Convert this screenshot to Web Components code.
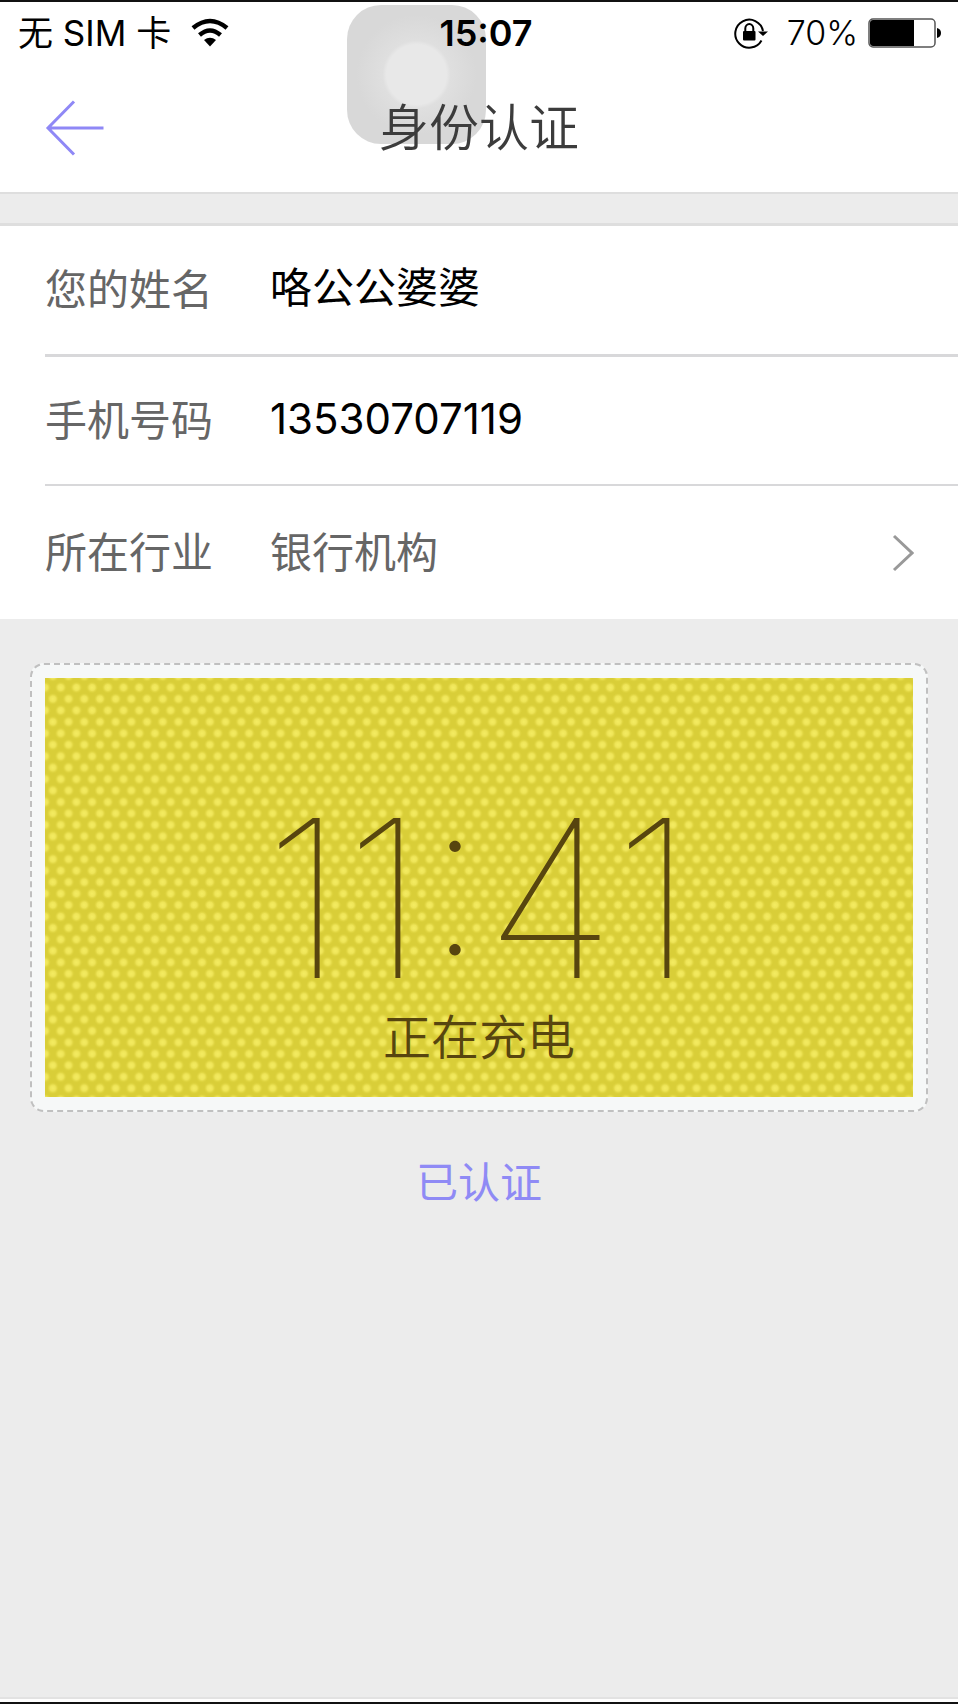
<!DOCTYPE html>
<html lang="zh-CN">
<head>
<meta charset="utf-8">
<meta name="viewport" content="width=device-width, initial-scale=1">
<title>身份认证</title>
<style>
  html { background: #ececec; }
  body { margin: 0; font-family: Inter, "Noto Sans CJK SC", sans-serif; color: #000; }
</style>
</head>
<body>
<identity-page></identity-page>

<script>
const define = (name, html, setup) => customElements.define(name, class extends HTMLElement {
  constructor() {
    super();
    this.attachShadow({ mode: "open" }).innerHTML = html;
  }
  connectedCallback() { if (setup) setup(this, this.shadowRoot); }
});

define("status-bar", `
<style>
  :host { display: grid; grid-template-columns: 1fr auto 1fr; align-items: center; height: 62px; padding: 0 16px 0 18px; font-size: 35px; line-height: 40px; }
  .left, .right { display: flex; align-items: center; }
  .left { gap: 20px; }
  .right { justify-content: flex-end; gap: 10px; font-size: 34px; font-weight: 300; }
  .lock { margin-right: 9px; }
  time { font-size: 36px; font-weight: 600; padding-left: 12px; }
  svg { display: block; flex: none; }
</style>
<div class="left"><span>无 SIM 卡</span>
  <svg width="38" height="30" viewBox="0 0 38 30" fill="none" stroke="#000" stroke-width="4.500" aria-label="Wi-Fi">
    <path d="M2 10 Q19 -4 36 10"/><path d="M8.500 17 Q19 8 29.500 17"/>
    <path d="M13 22 Q19 17.500 25 22 L19 28.500 Z" fill="#000" stroke="none"/>
  </svg>
</div>
<time>15:07</time>
<div class="right">
  <svg class="lock" width="34" height="32" viewBox="0 0 34 32" fill="none" aria-label="方向锁定">
    <path d="M27.500 23.500 A14 14 0 1 1 29 14" stroke="#000" stroke-width="2"/>
    <path d="M24 14.500 H34 L29 19 Z" fill="#000"/>
    <rect x="9" y="14" width="12.500" height="9.500" rx="1" fill="#000"/>
    <path d="M11.300 15 V11.500 a4 4.500 0 0 1 8 0 V15" stroke="#000" stroke-width="2"/>
  </svg>
  <span>70%</span>
  <svg width="74" height="30" viewBox="0 0 74 30" aria-label="电池">
    <rect x="1" y="1" width="66" height="28" rx="4" fill="#fff" stroke="#555" stroke-width="1.500"/>
    <path d="M5 2 H46 V28 H5 Q2 28 2 25 V5 Q2 2 5 2Z" fill="#000"/>
    <path d="M69 10 Q73 11 73 15 Q73 19 69 20Z" fill="#000"/>
  </svg>
</div>`);

define("nav-header", `
<style>
  :host { display: grid; grid-template-columns: 1fr auto 1fr; align-items: center; height: 128px; padding: 0 44px; border-bottom: 2px solid #dedede; }
  button { justify-self: start; display: block; padding: 0; border: 0; background: none; }
  svg { display: block; }
  h1 { margin: 0; font-size: 50px; line-height: 60px; font-weight: 350; color: #3c3c3c; }
</style>
<button aria-label="返回">
  <svg width="62" height="56" viewBox="0 0 62 56" fill="none" stroke="#8f88f6" stroke-width="3"><path d="M30 1.500 L4 28 L30 54.500 M4 28 H59.500"/></svg>
</button>
<h1><slot></slot></h1>`);

define("assistive-dot", `
<style>
  :host { display: block; width: 139px; height: 139px; border-radius: 34px; background: radial-gradient(circle at 50% 50%, #e8e8e8 30px, #dfdfdf 34px, #d8d8d8 60px); }
</style>`);

define("form-row", `
<style>
  :host { display: block; padding-left: 45px; background: #fff; }
  .row { display: flex; align-items: center; height: 127px; padding-right: 44px; border-bottom: 2px solid #d8d8da; }
  :host([first]) .row { height: 128px; border-bottom-width: 3px; }
  :host([last]) .row { height: 133px; border-bottom: 0; }
  label { flex: none; width: 225px; font-size: 42px; line-height: 60px; color: #666; }
  input, select { flex: 1; min-width: 0; height: 60px; margin: 0; padding: 0; border: 0; outline: 0; background: none; font: inherit; font-size: 42px; line-height: 60px; color: #000; appearance: none; }
  input { padding-bottom: 4px; }
  select { color: #666; opacity: 1; }
  svg { flex: none; }
</style>
<div class="row"></div>`, (host, root) => {
  const row = root.querySelector(".row");
  const value = host.getAttribute("value");
  const label = host.getAttribute("label");
  row.innerHTML = `<label for="field">${label}</label>` + (host.hasAttribute("choice")
    ? `<select id="field"><option>${value}</option></select>
       <svg width="22" height="38" viewBox="0 0 22 38" fill="none" stroke="#999" stroke-width="3"><path d="M2 2 L20 19 L2 36"/></svg>`
    : `<input id="field" type="${host.getAttribute("type") || "text"}" value="${value}">`);
});

define("photo-card", `
<style>
  :host { display: block; margin: 44px 30px 0; padding: 13px; border: 2px dashed #c0c0c0; border-radius: 14px; background: #f6f8f8; }
  .photo { position: relative; display: flex; flex-direction: column; align-items: center; height: 419px; color: #57450f; }
  .texture { position: absolute; inset: 0; width: 100%; height: 100%; }
  .clock, .state { position: relative; }
  .clock { margin-top: 110px; font-size: 220px; line-height: 220px; font-weight: 100; white-space: nowrap; }
  .state { font-size: 48px; line-height: 60px; font-weight: 350; }
</style>
<div class="photo">
  <svg class="texture" aria-hidden="true">
    <defs>
      <radialGradient id="glow"><stop offset="0" stop-color="#f4ec62"/><stop offset=".5" stop-color="#eee457"/><stop offset="1" stop-color="#dfd43e" stop-opacity="0"/></radialGradient>
      <pattern id="dots" width="15.700" height="22.900" patternUnits="userSpaceOnUse">
        <rect width="16" height="23" fill="#d9ce38"/>
        <circle cx="0" cy="9.500" r="6" fill="url(#glow)"/><circle cx="15.700" cy="9.500" r="6" fill="url(#glow)"/>
        <circle cx="7.850" cy="20.900" r="6" fill="url(#glow)"/><circle cx="7.850" cy="-2" r="6" fill="url(#glow)"/>
      </pattern>
    </defs>
    <rect width="100%" height="100%" fill="url(#dots)"/>
  </svg>
  <div class="clock">11:41</div>
  <div class="state">正在充电</div>
</div>`);

define("identity-page", `
<style>
  :host { position: relative; display: flex; flex-direction: column; min-height: 100vh; box-sizing: border-box; border-top: 2px solid #111; border-bottom: 2px solid #111; background: #ececec; }
  header { background: #fff; }
  status-bar, nav-header { position: relative; z-index: 1; }
  assistive-dot { position: absolute; top: 3px; left: 347px; }
  .band { height: 29px; border-bottom: 3px solid #dedede; }
  main { display: flex; flex-direction: column; flex: 1; }
  .verified { margin: 41px 0 0; text-align: center; font-size: 42px; line-height: 60px; color: #8f8af5; }
  .edge { height: 3px; background: #fff; border-top: 2px solid #e2e2e2; }
</style>
<header>
  <status-bar></status-bar>
  <nav-header>身份认证</nav-header>
  <assistive-dot></assistive-dot>
</header>
<main>
  <div class="band"></div>
  <form>
    <form-row first label="您的姓名" value="咯公公婆婆"></form-row>
    <form-row label="手机号码" type="tel" value="13530707119"></form-row>
    <form-row last choice label="所在行业" value="银行机构"></form-row>
  </form>
  <photo-card></photo-card>
  <p class="verified">已认证</p>
</main>
<div class="edge"></div>`);
</script>
</body>
</html>
